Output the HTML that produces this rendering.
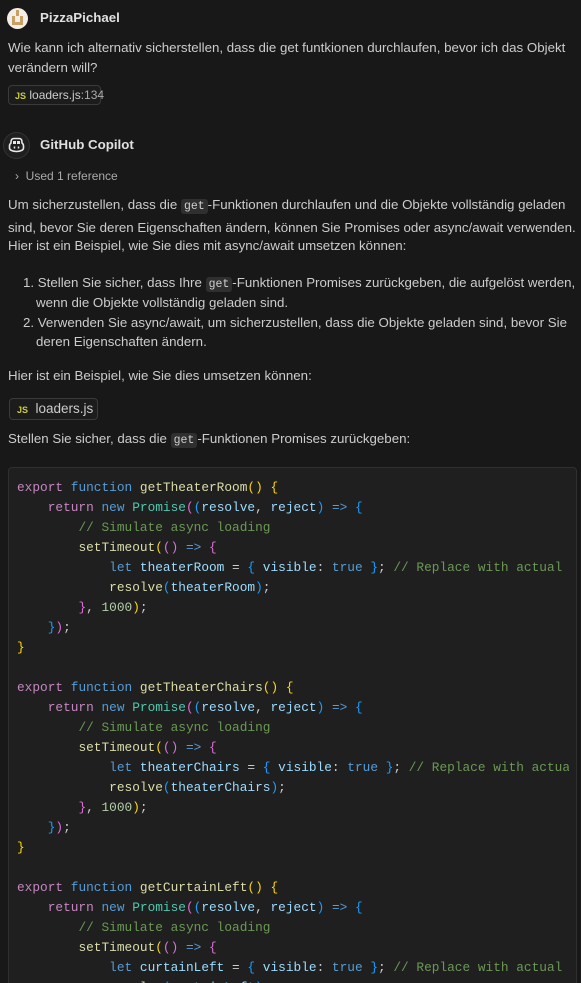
<!DOCTYPE html>
<html style="width:581px;height:983px;overflow:hidden"><head><meta charset="utf-8"><style>
*{margin:0;padding:0;box-sizing:border-box}
body{width:581px;height:983px;overflow:hidden;background:#181818;color:#cccccc;font-family:"Segoe UI","Liberation Sans",sans-serif;font-size:13.3px;position:relative}
.a{position:absolute;white-space:nowrap;line-height:20px}
.b{font-weight:bold;color:#e0e0e0}
.ic{font-family:"Liberation Mono",monospace;font-size:11.5px;background:#2f2f2f;border-radius:3px;padding:1px 3px;color:#d0d0d0}
.chip{position:absolute;border:1px solid #3a3a3a;border-radius:4px;background:#1c1c1c}
.js{color:#cbcb41;font-weight:bold;font-size:9px;font-family:"Liberation Sans",sans-serif}
.code{position:absolute;left:8px;top:467px;width:569px;height:516px;background:#1f1f1f;border:1px solid #2f2f2f;border-bottom:none;border-radius:4px 4px 0 0;overflow:hidden}
pre{position:absolute;left:8px;top:10px;font-family:"Liberation Mono",monospace;font-size:12.8px;line-height:20px;color:#cccccc;width:552px;overflow:hidden}
.k{color:#c586c0}.f{color:#569cd6}.y{color:#dcdcaa}.t{color:#4ec9b0}.p{color:#9cdcfe}.c{color:#6a9955}.n{color:#b5cea8}
.g{color:#ffd700}.m{color:#da70d6}.u{color:#179fff}
</style></head><body>
<div style="position:absolute;left:7px;top:8px;width:21px;height:21px;border-radius:50%;background:#f3efe8;overflow:hidden">
<div style="position:absolute;left:5px;top:8px;width:11px;height:9px;background:#c9a062"></div>
<div style="position:absolute;left:8px;top:8px;width:5px;height:6px;background:#f3efe8"></div>
<div style="position:absolute;left:9px;top:2px;width:3px;height:6px;background:#c9a062"></div>
</div>
<div class="a b" style="left:40px;top:8px">PizzaPichael</div>
<div class="a" style="left:8px;top:38px">Wie kann ich alternativ sicherstellen, dass die get funtkionen durchlaufen, bevor ich das Objekt</div>
<div class="a" style="left:8px;top:58px">verändern will?</div>
<div class="chip" style="left:8px;top:85px;width:93px;height:20px"></div>
<div class="a" style="left:15px;top:85px;font-size:12px"><span class="js">JS</span> loaders.js<span style="color:#aaa">:134</span></div>

<div style="position:absolute;left:3px;top:132px;width:27px;height:27px;border-radius:50%;background:#1f1f1f;border:1px solid #333"></div>
<svg style="position:absolute;left:8px;top:137px" width="17" height="16" viewBox="0 0 17 16">
<path d="M3 5 Q3 1.5 6 1.5 L11 1.5 Q14 1.5 14 5 L14 6 Q15.5 7 15.5 9 L15.5 11 Q15.5 14 8.5 14.5 Q1.5 14 1.5 11 L1.5 9 Q1.5 7 3 6 Z" fill="none" stroke="#e8e8e8" stroke-width="1.6"/>
<path d="M5 4 h3 v3 h-3z M9 4 h3 v3 h-3z" fill="#e8e8e8"/>
<path d="M6.5 9.5 v2 M10.5 9.5 v2" stroke="#e8e8e8" stroke-width="1.5"/>
</svg>
<div class="a b" style="left:40px;top:135px">GitHub Copilot</div>
<div class="a" style="left:15px;top:166px;font-size:12px;color:#aaa">›&nbsp;&nbsp;Used 1 reference</div>

<div class="a" style="left:8px;top:195px">Um sicherzustellen, dass die <span class="ic">get</span>-Funktionen durchlaufen und die Objekte vollständig geladen</div>
<div class="a" style="left:8px;top:218px">sind, bevor Sie deren Eigenschaften ändern, können Sie Promises oder async/await verwenden.</div>
<div class="a" style="left:8px;top:236px">Hier ist ein Beispiel, wie Sie dies mit async/await umsetzen können:</div>

<div class="a" style="left:23px;top:273px">1. Stellen Sie sicher, dass Ihre <span class="ic">get</span>-Funktionen Promises zurückgeben, die aufgelöst werden,</div>
<div class="a" style="left:36px;top:293px">wenn die Objekte vollständig geladen sind.</div>
<div class="a" style="left:23px;top:313px">2. Verwenden Sie async/await, um sicherzustellen, dass die Objekte geladen sind, bevor Sie</div>
<div class="a" style="left:36px;top:332px">deren Eigenschaften ändern.</div>

<div class="a" style="left:8px;top:366px">Hier ist ein Beispiel, wie Sie dies umsetzen können:</div>
<div class="chip" style="left:9px;top:398px;width:89px;height:22px"></div>
<div class="a" style="left:17px;top:399px;font-size:13.5px"><span class="js">JS</span>&nbsp; loaders.js</div>
<div class="a" style="left:8px;top:429px">Stellen Sie sicher, dass die <span class="ic">get</span>-Funktionen Promises zurückgeben:</div>

<div class="code"><pre><span class="k">export</span> <span class="f">function</span> <span class="y">getTheaterRoom</span><span class="g">()</span> <span class="g">{</span>
    <span class="k">return</span> <span class="f">new</span> <span class="t">Promise</span><span class="m">(</span><span class="u">(</span><span class="p">resolve</span>, <span class="p">reject</span><span class="u">)</span> <span class="f">=&gt;</span> <span class="u">{</span>
        <span class="c">// Simulate async loading</span>
        <span class="y">setTimeout</span><span class="g">(</span><span class="m">()</span> <span class="f">=&gt;</span> <span class="m">{</span>
            <span class="f">let</span> <span class="p">theaterRoom</span> = <span class="u">{</span> <span class="p">visible</span>: <span class="f">true</span> <span class="u">}</span>; <span class="c">// Replace with actual loading logic</span>
            <span class="y">resolve</span><span class="u">(</span><span class="p">theaterRoom</span><span class="u">)</span>;
        <span class="m">}</span>, <span class="n">1000</span><span class="g">)</span>;
    <span class="u">}</span><span class="m">)</span>;
<span class="g">}</span>

<span class="k">export</span> <span class="f">function</span> <span class="y">getTheaterChairs</span><span class="g">()</span> <span class="g">{</span>
    <span class="k">return</span> <span class="f">new</span> <span class="t">Promise</span><span class="m">(</span><span class="u">(</span><span class="p">resolve</span>, <span class="p">reject</span><span class="u">)</span> <span class="f">=&gt;</span> <span class="u">{</span>
        <span class="c">// Simulate async loading</span>
        <span class="y">setTimeout</span><span class="g">(</span><span class="m">()</span> <span class="f">=&gt;</span> <span class="m">{</span>
            <span class="f">let</span> <span class="p">theaterChairs</span> = <span class="u">{</span> <span class="p">visible</span>: <span class="f">true</span> <span class="u">}</span>; <span class="c">// Replace with actual loading logic</span>
            <span class="y">resolve</span><span class="u">(</span><span class="p">theaterChairs</span><span class="u">)</span>;
        <span class="m">}</span>, <span class="n">1000</span><span class="g">)</span>;
    <span class="u">}</span><span class="m">)</span>;
<span class="g">}</span>

<span class="k">export</span> <span class="f">function</span> <span class="y">getCurtainLeft</span><span class="g">()</span> <span class="g">{</span>
    <span class="k">return</span> <span class="f">new</span> <span class="t">Promise</span><span class="m">(</span><span class="u">(</span><span class="p">resolve</span>, <span class="p">reject</span><span class="u">)</span> <span class="f">=&gt;</span> <span class="u">{</span>
        <span class="c">// Simulate async loading</span>
        <span class="y">setTimeout</span><span class="g">(</span><span class="m">()</span> <span class="f">=&gt;</span> <span class="m">{</span>
            <span class="f">let</span> <span class="p">curtainLeft</span> = <span class="u">{</span> <span class="p">visible</span>: <span class="f">true</span> <span class="u">}</span>; <span class="c">// Replace with actual loading logic</span>
            <span class="y">resolve</span><span class="u">(</span><span class="p">curtainLeft</span><span class="u">)</span>;
</pre></div>
</body></html>
